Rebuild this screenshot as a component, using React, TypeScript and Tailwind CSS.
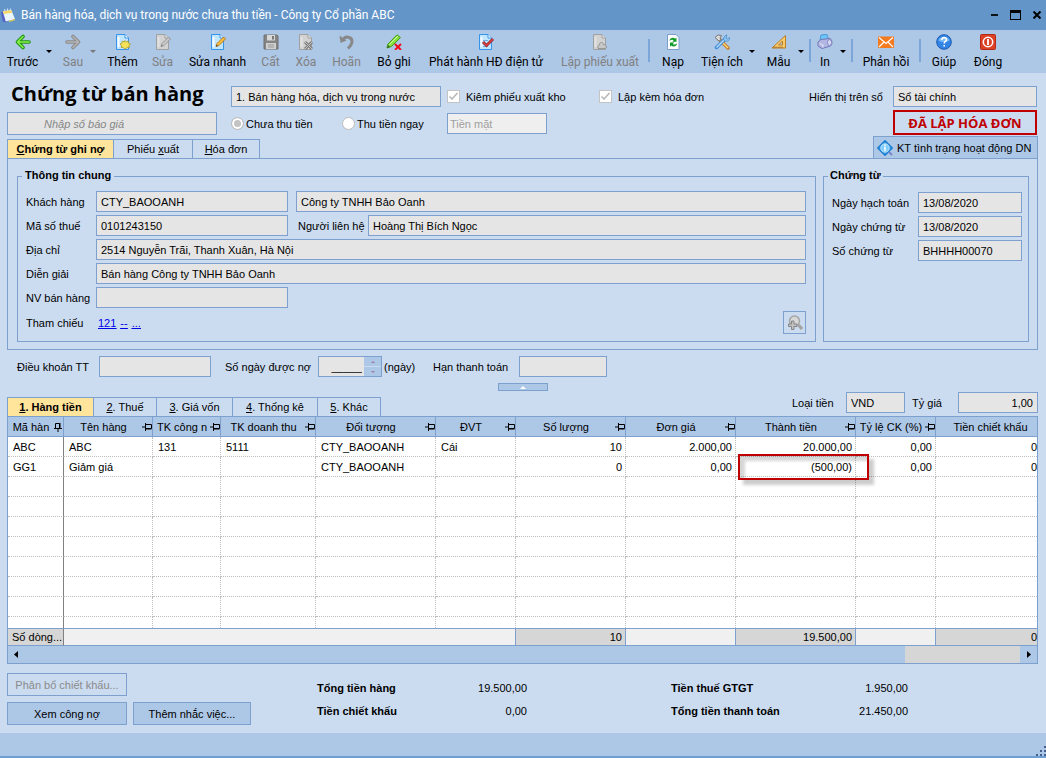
import type { ReactNode } from "react";

const field =
    "h-[21px] min-w-0 border border-[#7da0cf] bg-[#e5e5e5] px-1 text-[11px] text-black outline-none";

/* ---------- icons ---------- */

function Svg({ children, className = "h-4 w-4" }: { children: ReactNode; className?: string }) {
    return (
        <svg viewBox="0 0 16 16" fill="none" className={className} aria-hidden="true">
            {children}
        </svg>
    );
}

function ArrowIcon({ gray = false, flip = false }: { gray?: boolean; flip?: boolean }) {
    const d = flip ? "M2 8h11M8 2.500L13.500 8 8 13.500" : "M14 8H3M8 2.500L2.500 8 8 13.500";
    return (
        <Svg>
            <path d={d} stroke={gray ? "#8b8b8b" : "#1f9314"} strokeWidth="3.600" strokeLinecap="round" strokeLinejoin="round" />
            <path d={d} stroke={gray ? "#b4b4b4" : "#86f04a"} strokeWidth="1.600" strokeLinecap="round" strokeLinejoin="round" />
        </Svg>
    );
}

function Page({ gray = false }: { gray?: boolean }) {
    return (
        <>
            <path
                d="M1.500.5h8.500l3.500 3.500v11.500h-12z"
                fill={gray ? "#d2d2d2" : "#c3e6ff"}
                stroke={gray ? "#a0a0a0" : "#3594ea"}
            />
            <path d="M10 .5V4h3.500" fill={gray ? "#e5e5e5" : "#fff"} stroke={gray ? "#a0a0a0" : "#3594ea"} />
            <path d="M3.500 3v10" stroke={gray ? "#e2e2e2" : "#f4fbff"} strokeWidth="2" />
        </>
    );
}

function AddIcon() {
    return (
        <Svg>
            <Page />
            <path d="M10 6.500l1.200 1.300 2-.6.3 1.800 2 1-1.500 1.500.4 1.800-2.200.3L10 15.300l-1.700-1.700-2.200-.3.400-1.800L5 10l2-1 .3-1.800 2 .6z" fill="#f5e25a" stroke="#a8961f" strokeWidth=".8" />
        </Svg>
    );
}

function EditIcon({ gray = false }: { gray?: boolean }) {
    return (
        <Svg>
            <Page gray={gray} />
            <path d="M6 12.500l1-3L13.500 3l2 2L9 11.500z" fill={gray ? "#c9c9c9" : "#f9bd3b"} stroke={gray ? "#8f8f8f" : "#b2761b"} strokeWidth=".9" />
            <path d="M6 12.500l.6-1.800 1.200 1.200z" fill={gray ? "#777" : "#333"} />
        </Svg>
    );
}

function SaveIcon() {
    return (
        <Svg>
            <path d="M1 1h13l1 1v13H1z" fill="#858585" stroke="#707070" />
            <path d="M4 1h8v5.500H4z" fill="#d9d9d9" />
            <path d="M9 2h2v3.500H9z" fill="#777" />
            <path d="M3 9h10v6H3z" fill="#cfcfcf" />
            <path d="M5 11h6M5 13h6" stroke="#9a9a9a" />
        </Svg>
    );
}

function DeleteIcon() {
    return (
        <Svg>
            <Page gray />
            <path d="M7 8l7 7M14 8l-7 7" stroke="#808080" strokeWidth="3" />
            <path d="M7 8l7 7M14 8l-7 7" stroke="#c2c2c2" />
        </Svg>
    );
}

function UndoIcon() {
    return (
        <Svg>
            <path d="M4 6C6 1.500 13 2.500 13 7.500c0 3-2 5-4 7" stroke="#888" strokeWidth="3" />
            <path d="M.5 1.500L1.500 9l6-2.500z" fill="#888" />
        </Svg>
    );
}

function UnpostIcon() {
    return (
        <Svg>
            <path d="M1 14l1-4L11 .8l3.500 2.700-9 9z" fill="#86df3d" stroke="#3f9d1a" />
            <path d="M3.500 10.500L12 2" stroke="#d4fbaa" />
            <path d="M1 14l1-3 2 2z" fill="#3d6024" />
            <path d="M9 10l6 6M15 10l-6 6" stroke="#f00b17" strokeWidth="1.800" />
        </Svg>
    );
}

function PublishIcon() {
    return (
        <Svg>
            <Page />
            <path d="M5 6.500h5M5 12.500h5" stroke="#6faee5" />
            <path d="M5 8l3.500 3.500L15 5" stroke="#7c3440" strokeWidth="3" />
            <path d="M5 8l3.500 3.500L15 5" stroke="#e03a3a" strokeWidth="1.600" />
        </Svg>
    );
}

function StockIcon() {
    return (
        <Svg>
            <Page gray />
            <path d="M6 14.500c-1-3 1-3.500 1.500-3.500C7 8 11 7.500 11.500 10.500c3-.5 4 4 1.500 4z" fill="#c7c7c7" stroke="#969696" />
        </Svg>
    );
}

function ReloadIcon() {
    return (
        <Svg>
            <path d="M2.500.5H11l3 3v12H2.500z" fill="#fff" stroke="#7b9fcc" />
            <path d="M4.500 7c.3-3.500 4-4 5.700-2.300L11.500 3.500v4.300H7.300L8.700 6.300C7.500 5.300 6 5.500 4.500 7zM12 9.200c-.3 3.500-4 4-5.700 2.300L5 12.700V8.400h4.200L7.800 9.900c1.200 1 2.700.8 4.200-.7z" fill="#0f9b29" />
        </Svg>
    );
}

function ToolsIcon() {
    return (
        <Svg>
            <path d="M5 5l9 9" stroke="#c07f25" strokeWidth="3.400" strokeLinecap="round" />
            <path d="M6 6l8 8" stroke="#ffd47a" strokeWidth="1.400" />
            <path d="M1 3.500L4 1l3.500.5L6 4l1 2-2 1z" fill="#dcdcdc" stroke="#6f6f6f" strokeWidth=".9" />
            <path d="M2.500 13.500L10.500 5.500" stroke="#3d8ad6" strokeWidth="3.400" strokeLinecap="round" />
            <path d="M2.500 13.500L10.500 5.500" stroke="#b5dcfa" strokeWidth="1.400" />
            <path d="M10 6.500c-1-3 1-5.500 3-5.500l-1 3 1.500 1 2-1.500c.5 3-2 5-5.500 3z" fill="#8bc8f5" stroke="#468bcc" strokeWidth=".8" />
        </Svg>
    );
}

function RulerIcon() {
    return (
        <Svg>
            <path d="M1 14L14.500 1.500V14z" fill="#f7cc6e" stroke="#bf7d20" />
            <path d="M7.500 11l4-4v4z" fill="#adc7e7" stroke="#bf7d20" />
            <path d="M3 14v-1.500M5 14v-1.500M7 14v-1.500M9 14v-1.500M11 14v-1.500" stroke="#7b4e12" strokeWidth=".7" />
        </Svg>
    );
}

function PrinterIcon() {
    return (
        <Svg>
            <path d="M3 6l1-5 6-.5L11.500 5z" fill="#6cc6f7" stroke="#4b98d7" />
            <path d="M1 8l3-2.500L13 4.500c2.500 1.500 2.500 6 .5 7.500L5 14.500 1 12z" fill="#b3b6e3" stroke="#7479b7" />
            <path d="M2.500 9.500L6 11v2.500" stroke="#e4e5fb" />
            <ellipse cx="12.500" cy="8.500" rx="2" ry="3" fill="#d9daf4" stroke="#8488c4" />
        </Svg>
    );
}

function MailIcon() {
    return (
        <Svg>
            <path d="M0 2.500h16v11.500H0z" fill="#f47a20" />
            <path d="M1 3.500l7 6 7-6M1 13l5-5M15 13l-5-5" stroke="#fff" strokeWidth="1.100" />
        </Svg>
    );
}

function HelpIcon() {
    return (
        <Svg>
            <circle cx="8" cy="8" r="7.300" fill="#3284e5" stroke="#1e5bb0" />
            <path d="M2.500 6.500C3.500 1.500 12.500 1.500 13.500 6.500c-3 2-8 2-11 0z" fill="#79b9f7" />
            <path d="M5.800 6c0-3.300 4.700-3 4.600-.2 0 1.700-2.200 1.700-2.200 3.700M8.200 11v1.600" stroke="#fff" strokeWidth="1.600" />
        </Svg>
    );
}

function PowerIcon() {
    return (
        <Svg>
            <rect x=".5" y=".5" width="15" height="15" rx="1" fill="#dd4227" stroke="#b32914" />
            <circle cx="8" cy="8" r="4.700" stroke="#fff" strokeWidth="1.500" />
            <path d="M8 5v6" stroke="#fff" strokeWidth="1.800" />
        </Svg>
    );
}

function InfoIcon() {
    return (
        <Svg>
            <path d="M8 .8L15.200 8 8 15.200.8 8z" fill="#2f9ae8" stroke="#1f7fd0" strokeWidth="1.600" strokeLinejoin="round" />
            <circle cx="8" cy="8" r="4.200" fill="#7fcbfa" stroke="#d5f0ff" strokeWidth=".8" />
            <path d="M8 4.500V6M7 7.500h1V11" stroke="#fff" strokeWidth="1.500" />
            <path d="M12 12l3 3" stroke="#7a83c9" strokeWidth="2" />
        </Svg>
    );
}

function ZoomIcon() {
    return (
        <Svg>
            <circle cx="7.500" cy="6" r="5" fill="#d8d8d8" stroke="#a5a5a5" strokeWidth="1.500" />
            <path d="M11.500 10l3.500 4" stroke="#a3a3a3" strokeWidth="3" />
            <path d="M4.500 6h2.500v3h3v2.500H7v3H4.500v-3h-3V9h3z" fill="#c0c0c0" stroke="#858585" />
        </Svg>
    );
}

function NoteIcon() {
    return (
        <Svg className="h-[15px] w-[15px]">
            <path d="M0 5l4-3 5 11-4 2.500-3-1z" fill="#5361c6" />
            <path d="M2 3.500L11 2l4 10-10 2.500z" fill="#e9f6ff" />
            <path d="M2 3.500L11 2l1 3-9 1.500z" fill="#f8d763" />
            <path d="M4 1v3M7 .5V3M10 .5v2.500" stroke="#dfe7fa" />
            <path d="M8 13.500l7-2v1.500l-6 2z" fill="#d2c45e" />
        </Svg>
    );
}

function Pin({ fixed = false }: { fixed?: boolean }) {
    return (
        <svg viewBox="0 0 10 10" className="h-[10px] w-[10px] shrink-0" fill="none" stroke="#000" aria-hidden="true">
            {fixed ? (
                <path d="M1 6.500h8M2.500 6V1.500h4V6M7 1v5M5 7v3" />
            ) : (
                <path d="M3.500 1v8M4 2.500h5.500v4H4M4 7h5.500M0 5h3.500" />
            )}
        </svg>
    );
}

function Caret({ gray = false }: { gray?: boolean }) {
    return (
        <button type="button" aria-label="Mở rộng" className="mr-1 flex w-2 shrink-0 justify-center pt-[20px]">
            <svg viewBox="0 0 6 3" className="h-[3px] w-[6px]" aria-hidden="true">
                <path d="M0 0h6L3 3z" fill={gray ? "#777" : "#000"} />
            </svg>
        </button>
    );
}

/* ---------- toolbar ---------- */

type Tool =
    | { kind: "sep" }
    | { kind?: "button"; label: string; icon: ReactNode; width: string; disabled?: boolean; caret?: boolean };

const tools: Tool[] = [
    { label: "Trước", icon: <ArrowIcon />, width: "w-[45px]", caret: true },
    { label: "Sau", icon: <ArrowIcon gray flip />, width: "w-[32px]", disabled: true, caret: true },
    { label: "Thêm", icon: <AddIcon />, width: "w-[43px]" },
    { label: "Sửa", icon: <EditIcon gray />, width: "w-[37px]", disabled: true },
    { label: "Sửa nhanh", icon: <EditIcon />, width: "w-[73px]" },
    { label: "Cất", icon: <SaveIcon />, width: "w-[33px]", disabled: true },
    { label: "Xóa", icon: <DeleteIcon />, width: "w-[38px]", disabled: true },
    { label: "Hoãn", icon: <UndoIcon />, width: "w-[43px]", disabled: true },
    { label: "Bỏ ghi", icon: <UnpostIcon />, width: "w-[52px]" },
    { label: "Phát hành HĐ điện tử", icon: <PublishIcon />, width: "w-[132px]" },
    { label: "Lập phiếu xuất", icon: <StockIcon />, width: "w-[96px]", disabled: true },
    { kind: "sep" },
    { label: "Nạp", icon: <ReloadIcon />, width: "w-[46px]" },
    { label: "Tiện ích", icon: <ToolsIcon />, width: "w-[52px]", caret: true },
    { label: "Mẫu", icon: <RulerIcon />, width: "w-[37px]", caret: true },
    { kind: "sep" },
    { label: "In", icon: <PrinterIcon />, width: "w-[28px]", caret: true },
    { kind: "sep" },
    { label: "Phản hồi", icon: <MailIcon />, width: "w-[66px]" },
    { kind: "sep" },
    { label: "Giúp", icon: <HelpIcon />, width: "w-[46px]" },
    { label: "Đóng", icon: <PowerIcon />, width: "w-[42px]" },
];

function Toolbar() {
    return (
        <nav className="flex h-[43px] bg-[#adc7e7] font-[Roboto,sans-serif] text-[12px]">
            {tools.map((t, i) =>
                t.kind === "sep" ? (
                    <div key={i} className="mt-[9px] h-[23px] w-[2px] shrink-0 bg-[#7ca5d8]" />
                ) : (
                    <div key={i} className="flex shrink-0">
                        <button
                            type="button"
                            disabled={t.disabled}
                            className={`flex flex-col items-center gap-1 pt-1 leading-4 whitespace-nowrap disabled:text-[#808080] ${t.width}`}
                        >
                            {t.icon}
                            {t.label}
                        </button>
                        {t.caret && <Caret gray={t.disabled} />}
                    </div>
                ),
            )}
        </nav>
    );
}

/* ---------- tabs ---------- */

type Tab = { hot: string; before?: string; after: string; width: string };

const mainTabs: Tab[] = [
    { hot: "C", after: "hứng từ ghi nợ", width: "w-[106px]" },
    { before: "Phiếu ", hot: "x", after: "uất", width: "w-[79px]" },
    { hot: "H", after: "óa đơn", width: "w-[67px]" },
];

const detailTabs: Tab[] = [
    { hot: "1", after: ". Hàng tiền", width: "w-[86px]" },
    { hot: "2", after: ". Thuế", width: "w-[63px]" },
    { hot: "3", after: ". Giá vốn", width: "w-[76px]" },
    { hot: "4", after: ". Thống kê", width: "w-[85px]" },
    { hot: "5", after: ". Khác", width: "w-[63px]" },
];

function Tabs({ items }: { items: Tab[] }) {
    return (
        <div role="tablist" className="flex border-l border-[#7da0cf]">
            {items.map((t, i) => (
                <button
                    key={t.after}
                    type="button"
                    role="tab"
                    aria-selected={i === 0}
                    className={`h-[19px] border-t border-r border-[#7da0cf] whitespace-nowrap ${t.width} ${i === 0 ? "bg-[#ffe49b] font-bold" : ""}`}
                >
                    {t.before}
                    <u>{t.hot}</u>
                    {t.after}
                </button>
            ))}
        </div>
    );
}

/* ---------- form ---------- */

function Row({ id, label, value, width, labelWidth = "w-[70px]" }: { id: string; label: string; value: string; width: string; labelWidth?: string }) {
    return (
        <div className="flex items-center">
            <label htmlFor={id} className={`shrink-0 whitespace-nowrap ${labelWidth}`}>
                {label}
            </label>
            <input id={id} readOnly defaultValue={value} className={`${field} ${width}`} />
        </div>
    );
}

function Check({ label }: { label: string }) {
    return (
        <label className="flex w-[152px] items-center gap-[6px] whitespace-nowrap">
            <span className="grid h-[13px] w-[13px] shrink-0">
                <input type="checkbox" defaultChecked disabled className="col-start-1 row-start-1 h-[13px] w-[13px] appearance-none border border-[#c4c4c4] bg-white" />
                <svg viewBox="0 0 13 13" className="col-start-1 row-start-1 h-[13px] w-[13px]" fill="none" stroke="#b5b5b5" strokeWidth="1.500" aria-hidden="true">
                    <path d="M2.500 6.500L5 9l5.500-6" />
                </svg>
            </span>
            {label}
        </label>
    );
}

function Radio({ label, width, checked = false }: { label: string; width: string; checked?: boolean }) {
    return (
        <label className={`flex items-center gap-[2px] whitespace-nowrap ${width}`}>
            <input
                type="radio"
                name="payment"
                disabled
                defaultChecked={checked}
                className="h-[13px] w-[13px] shrink-0 appearance-none rounded-full border border-[#bcbcbc] bg-white checked:bg-[#c3c3c3] checked:shadow-[inset_0_0_0_2px_#fff]"
            />
            {label}
        </label>
    );
}

function Header() {
    return (
        <header className="flex h-[63px] shrink-0 pt-[6px]">
            <div className="w-[210px] shrink-0">
                <h1 className="h-[33px] pl-1 font-['Open_Sans',sans-serif] text-[20px] leading-[30px] font-bold whitespace-nowrap">
                    Chứng từ bán hàng
                </h1>
                <input
                    aria-label="Số báo giá"
                    placeholder="Nhập số báo giá"
                    className="block h-[23px] w-full border border-[#7da0cf] bg-[#e5e5e5] pl-9 text-[11px] italic outline-none placeholder:text-[#858585]"
                />
            </div>
            <div className="ml-[14px] flex flex-1 flex-col gap-[6px] pt-[7px]">
                <div className="flex h-[21px] items-center">
                    <input aria-label="Loại chứng từ" readOnly defaultValue="1. Bán hàng hóa, dịch vụ trong nước" className={`${field} mr-[6px] w-[210px]`} />
                    <Check label="Kiêm phiếu xuất kho" />
                    <Check label="Lập kèm hóa đơn" />
                </div>
                <div className="flex h-[21px] items-center">
                    <Radio label="Chưa thu tiền" width="w-[111px]" checked />
                    <Radio label="Thu tiền ngay" width="w-[105px]" />
                    <input aria-label="Phương thức" disabled defaultValue="Tiền mặt" className="h-[21px] w-[100px] border border-[#7da0cf] bg-[#efefef] px-[2px] text-[11px] text-[#a0a0a0]" />
                </div>
            </div>
            <div className="flex flex-col items-end gap-[3px] pt-[7px] pr-px">
                <Row id="book" label="Hiển thị trên sổ" value="Sổ tài chính" width="w-[144px]" labelWidth="w-[84px]" />
                <strong className="flex h-[25px] w-[144px] items-center justify-center border-2 border-[#c00000] font-['Open_Sans',sans-serif] text-[13px] text-[#c00000]">
                    ĐÃ LẬP HÓA ĐƠN
                </strong>
            </div>
        </header>
    );
}

function General() {
    return (
        <fieldset className="min-w-0 flex-1 border border-[#7da0cf] pb-[7px] pl-2 pr-[9px]">
            <legend className="-ml-1 h-4 px-[3px] leading-[15px] font-bold">Thông tin chung</legend>
            <div className="flex flex-col gap-[3px] pt-[7px]">
                <div className="flex gap-2">
                    <Row id="customer" label="Khách hàng" value="CTY_BAOOANH" width="w-[192px]" />
                    <input aria-label="Tên khách hàng" readOnly defaultValue="Công ty TNHH Bảo Oanh" className={`${field} flex-1`} />
                </div>
                <div className="flex items-center">
                    <Row id="tax" label="Mã số thuế" value="0101243150" width="w-[192px]" />
                    <label htmlFor="contact" className="ml-[10px] w-[70px] shrink-0 whitespace-nowrap">Người liên hệ</label>
                    <input id="contact" readOnly defaultValue="Hoàng Thị Bích Ngọc" className={`${field} flex-1`} />
                </div>
                <Row id="address" label="Địa chỉ" value="2514 Nguyễn Trãi, Thanh Xuân, Hà Nội" width="flex-1" />
                <Row id="note" label="Diễn giải" value="Bán hàng Công ty TNHH Bảo Oanh" width="flex-1" />
                <Row id="seller" label="NV bán hàng" value="" width="w-[192px]" />
                <div className="flex h-[23px] items-center">
                    <span className="w-[72px]">Tham chiếu</span>
                    <span className="flex flex-1 gap-1 text-[#0000e6] underline">
                        <a href="#121">121</a>
                        <a href="#ref">--</a>
                        <a href="#more">...</a>
                    </span>
                    <button type="button" aria-label="Tìm" disabled className="grid h-[23px] w-[23px] place-items-center border border-[#7da0cf]">
                        <ZoomIcon />
                    </button>
                </div>
            </div>
        </fieldset>
    );
}

function Voucher() {
    return (
        <fieldset className="w-[206px] shrink-0 border border-[#7da0cf] px-2">
            <legend className="-ml-1 h-4 px-[2px] leading-[15px] font-bold">Chứng từ</legend>
            <div className="-mr-[2px] flex flex-col gap-[3px] pt-2">
                <Row id="posted" label="Ngày hạch toán" value="13/08/2020" width="w-[104px]" labelWidth="w-[86px]" />
                <Row id="dated" label="Ngày chứng từ" value="13/08/2020" width="w-[104px]" labelWidth="w-[86px]" />
                <Row id="number" label="Số chứng từ" value="BHHHH00070" width="w-[104px]" labelWidth="w-[86px]" />
            </div>
        </fieldset>
    );
}

function Terms() {
    return (
        <div className="flex items-center pt-[6px] pl-[10px]">
            <Row id="terms" label="Điều khoản TT" value="" width="w-[112px]" labelWidth="w-[82px]" />
            <label htmlFor="days" className="ml-[14px] w-[93px] whitespace-nowrap">Số ngày được nợ</label>
            <div className="flex h-[21px] w-[64px] border border-[#7da0cf]">
                <input id="days" readOnly defaultValue="_____" className="min-w-0 flex-1 bg-[#e5e5e5] pr-[2px] text-right text-[11px] outline-none" />
                <div className="flex w-[17px] flex-col gap-px">
                    {["M0 3h6L3 0z", "M0 0h6L3 3z"].map((d, i) => (
                        <button key={d} type="button" disabled aria-label={i ? "Giảm" : "Tăng"} className="grid flex-1 place-items-center bg-[#adc7e7]">
                            <svg viewBox="0 0 6 3" className="h-[2px] w-[4px]" aria-hidden="true">
                                <path d={d} fill="#a47b9f" />
                            </svg>
                        </button>
                    ))}
                </div>
            </div>
            <span className="ml-[2px] w-[49px]">(ngày)</span>
            <Row id="due" label="Hạn thanh toán" value="" width="w-[88px]" labelWidth="w-[86px]" />
        </div>
    );
}

/* ---------- detail grid ---------- */

type Column = { title: string; width?: string; num?: boolean; total?: string };

const columns: Column[] = [
    { title: "Mã hàn", width: "w-[56px]", total: "Số dòng..." },
    { title: "Tên hàng", width: "w-[89px]" },
    { title: "TK công n", width: "w-[68px]" },
    { title: "TK doanh thu", width: "w-[95px]" },
    { title: "Đối tượng", width: "w-[120px]" },
    { title: "ĐVT", width: "w-[80px]" },
    { title: "Số lượng", width: "w-[110px]", num: true, total: "10" },
    { title: "Đơn giá", width: "w-[110px]", num: true },
    { title: "Thành tiền", width: "w-[120px]", num: true, total: "19.500,00" },
    { title: "Tỷ lệ CK (%)", width: "w-[80px]", num: true },
    { title: "Tiền chiết khấu", num: true, total: "0" },
];

const rows: string[][] = [
    ["ABC", "ABC", "131", "5111", "CTY_BAOOANH", "Cái", "10", "2.000,00", "20.000,00", "0,00", "0"],
    ["GG1", "Giảm giá", "", "", "CTY_BAOOANH", "", "0", "0,00", "(500,00)", "0,00", "0"],
    ...Array.from({ length: 8 }, () => Array<string>(11).fill("")),
];

function Grid() {
    const last = columns.length - 1;
    return (
        <div className="border border-[#7da0cf] bg-white">
            <table className="w-full table-fixed border-separate border-spacing-0">
                <thead>
                    <tr className="h-[20px] bg-[#adc7e7]">
                        {columns.map((c, i) => (
                            <th key={c.title} className={`border-b border-[#7da0cf] p-0 font-normal ${c.width ?? ""} ${i < last ? "border-r" : ""}`}>
                                <div className={`flex items-center ${i < last ? "pl-px" : "pl-2"}`}>
                                    <span className="flex-1 text-center whitespace-nowrap">{c.title}</span>
                                    {i < last && <Pin fixed={i === 0} />}
                                </div>
                            </th>
                        ))}
                    </tr>
                </thead>
                <tbody>
                    {rows.map((r, y) => (
                        <tr key={y} className={y === rows.length - 1 ? "h-[11px]" : "h-[20px]"}>
                            {r.map((text, i) => (
                                <td
                                    key={i}
                                    className={`relative border-dotted border-[#bdbdbd] p-0 whitespace-nowrap ${y < rows.length - 1 ? "border-b" : ""} ${i < last ? "border-r pr-[3px]" : ""} ${columns[i].num ? "text-right" : "pl-[5px]"} ${i === 0 ? "[border-right-style:solid] border-r-[#808080]" : ""}`}
                                >
                                    {text}
                                    {text === "(500,00)" && (
                                        <span className="absolute -top-[3px] left-[2px] z-10 h-[26px] w-[131px] border-2 border-[#c00000] shadow-[5px_5px_3px_rgba(0,0,0,0.2),inset_5px_5px_3px_rgba(0,0,0,0.16)]" />
                                    )}
                                </td>
                            ))}
                        </tr>
                    ))}
                </tbody>
                <tfoot>
                    <tr className="h-[18px]">
                        {columns.map((c, i) => (
                            <td
                                key={c.title}
                                className={`border-y border-[#7da0cf] p-0 whitespace-nowrap ${c.total ? "bg-[#d6d6d6]" : "bg-[#f0f0f0]"} ${c.num ? "text-right" : "pl-1"} ${i === 0 ? "border-r border-r-[#808080]" : ""} ${i >= 5 && i < last ? "border-r pr-[3px]" : ""}`}
                            >
                                {c.total}
                            </td>
                        ))}
                    </tr>
                </tfoot>
            </table>
            <div className="flex h-[17px] items-center bg-[#adc7e7] px-[6px]">
                <svg viewBox="0 0 4 7" className="h-[7px] w-[4px]" aria-hidden="true"><path d="M4 0v7L0 3.500z" /></svg>
                <div className="mr-[7px] ml-auto h-full w-[115px] bg-[#d6d6d6]" />
                <svg viewBox="0 0 4 7" className="h-[7px] w-[4px]" aria-hidden="true"><path d="M0 0v7l4-3.500z" /></svg>
            </div>
        </div>
    );
}

/* ---------- bottom ---------- */

function Totals({ items, width }: { items: [string, string][]; width: string }) {
    return (
        <dl className={`flex flex-col gap-[7px] ${width}`}>
            {items.map(([label, value]) => (
                <div key={label} className="flex h-4 items-center justify-between">
                    <dt className="font-bold">{label}</dt>
                    <dd>{value}</dd>
                </div>
            ))}
        </dl>
    );
}

function Bottom() {
    const button = "h-[23px] border border-[#7da0cf] bg-[#adc7e7]";
    return (
        <footer className="flex pt-[9px] pb-2">
            <div className="flex w-[310px] flex-col gap-[6px]">
                <button type="button" disabled className="h-[23px] w-[120px] border border-[#7da0cf] text-[#8a8a8a]">
                    Phân bổ chiết khấu...
                </button>
                <div className="flex gap-[6px]">
                    <button type="button" className={`${button} w-[120px]`}>Xem công nợ</button>
                    <button type="button" className={`${button} w-[118px]`}>Thêm nhắc việc...</button>
                </div>
            </div>
            <div className="flex gap-[144px] pt-[7px]">
                <Totals width="w-[210px]" items={[["Tổng tiền hàng", "19.500,00"], ["Tiền chiết khấu", "0,00"]]} />
                <Totals width="w-[237px]" items={[["Tiền thuế GTGT", "1.950,00"], ["Tổng tiền thanh toán", "21.450,00"]]} />
            </div>
        </footer>
    );
}

export default function App() {
    return (
        <div className="flex min-h-screen flex-col bg-[#cbdcf1] font-['Liberation_Sans',Arial,sans-serif] text-[11px] leading-4 text-black">
            <div className="flex h-[30px] items-center bg-[#6495c8] pr-[5px] pl-px font-[Roboto,sans-serif] text-[12px] text-white">
                <NoteIcon />
                <span className="ml-[5px] flex-1">Bán hàng hóa, dịch vụ trong nước chưa thu tiền - Công ty Cổ phần ABC</span>
                <div className="flex items-center gap-[12px]">
                    <button type="button" aria-label="Thu nhỏ">
                        <Svg className="h-[10px] w-[7px]"><path d="M0 8h16" stroke="#000" strokeWidth="4" /></Svg>
                    </button>
                    <button type="button" aria-label="Phóng to" className="h-[10px] w-[11px] border border-t-[3px] border-black" />
                    <button type="button" aria-label="Đóng cửa sổ">
                        <Svg className="h-[8px] w-[8px]"><path d="M1 1l14 14M15 1L1 15" stroke="#000" strokeWidth="4" /></Svg>
                    </button>
                </div>
            </div>
            <Toolbar />
            <main className="flex-1 pr-2 pl-[7px]">
                <Header />
                <div className="flex items-end justify-between">
                    <Tabs items={mainTabs} />
                    <button type="button" className="flex h-[22px] w-[165px] items-center gap-1 border border-b-0 border-[#7da0cf] bg-[#adc7e7] pl-[3px] whitespace-nowrap">
                        <InfoIcon />
                        KT tình trạng hoạt động DN
                    </button>
                </div>
                <section className="flex gap-[7px] border border-[#7da0cf] pt-[9px] pr-2 pb-[7px] pl-[9px]">
                    <General />
                    <Voucher />
                </section>
                <Terms />
                <div className="flex justify-center pt-[6px]">
                    <button type="button" aria-label="Thu gọn" className="grid h-2 w-[50px] place-items-center border border-[#7da0cf] bg-[#adc7e7]">
                        <svg viewBox="0 0 6 3" className="h-[3px] w-[6px]" aria-hidden="true"><path d="M0 3h6L3 0z" fill="#fff" /></svg>
                    </button>
                </div>
                <div className="flex h-[25px] items-end justify-between">
                    <Tabs items={detailTabs} />
                    <div className="flex gap-[7px] pb-[3px]">
                        <Row id="currency" label="Loại tiền" value="VND" width="w-[59px]" labelWidth="w-[54px]" />
                        <Row id="rate" label="Tỷ giá" value="1,00" width="w-[80px] text-right" labelWidth="w-[46px]" />
                    </div>
                </div>
                <Grid />
                <Bottom />
            </main>
            <div className="flex h-[25px] items-end justify-end border-b-2 border-[#6f9fd2] bg-[#adc7e7]">
                <svg viewBox="0 0 10 10" className="h-[10px] w-[10px]" fill="#44618d" aria-hidden="true">
                    <path d="M8 0h2v2H8zM4 4h2v2H4zM8 4h2v2H8zM0 8h2v2H0zM4 8h2v2H4zM8 8h2v2H8z" />
                </svg>
            </div>
        </div>
    );
}
